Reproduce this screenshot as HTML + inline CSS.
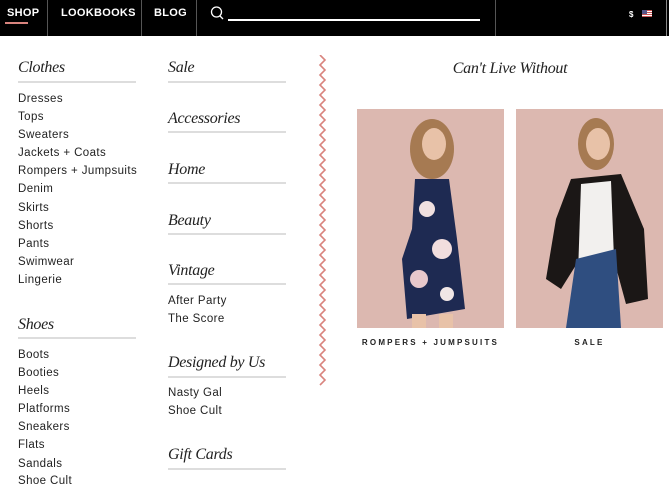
<!DOCTYPE html>
<html><head><style>
*{margin:0;padding:0;box-sizing:border-box}
body{width:669px;height:501px;background:#fff;position:relative;overflow:hidden;font-family:"Liberation Sans",sans-serif;color:#111}
.nav{position:absolute;left:0;top:0;width:669px;height:36px;background:#000}
.nav span{position:absolute;top:7px;color:#fff;font-size:11px;font-weight:bold;letter-spacing:0.3px}
.vd{position:absolute;top:0;width:1px;height:36px;background:#555}
.h{position:absolute;font-family:"Liberation Serif",serif;font-style:italic;font-size:16px;line-height:18px;color:#222;letter-spacing:-0.3px}
.r{position:absolute;height:2px;width:118px;background:#ddd}
.i{position:absolute;font-size:11.5px;line-height:14px;letter-spacing:0.4px;color:#222;white-space:nowrap}
.cap{position:absolute;top:338px;font-size:8px;letter-spacing:2.2px;font-weight:bold;color:#222;text-align:center;white-space:nowrap}
</style></head><body>
<div class="nav">
<span style="left:7px">SHOP</span>
<div style="position:absolute;left:5px;top:22px;width:23px;height:2px;background:#d9847e"></div>
<div class="vd" style="left:47px"></div>
<span style="left:61px">LOOKBOOKS</span>
<div class="vd" style="left:141px"></div>
<span style="left:154px">BLOG</span>
<div class="vd" style="left:196px"></div>
<svg style="position:absolute;left:210px;top:5px" width="14" height="16"><circle cx="6.5" cy="7" r="5" fill="none" stroke="#fff" stroke-width="1.3"/><line x1="10" y1="11" x2="13" y2="14" stroke="#fff" stroke-width="1.3"/></svg>
<div style="position:absolute;left:228px;top:19px;width:252px;height:2px;background:#fff"></div>
<div class="vd" style="left:495px"></div>
<span style="left:629px;font-size:8px;top:10px">$</span>
<div style="position:absolute;left:642px;top:10px;width:10px;height:7px;background:repeating-linear-gradient(#c55 0 1px,#fff 1px 2px)"><div style="width:5px;height:4px;background:#558"></div></div>
<div class="vd" style="left:666px;background:#888"></div>
</div>

<div class="h" style="left:18px;top:59px">Clothes</div><div class="r" style="left:18px;top:81px"></div>
<div class="i" style="left:18px;top:92px">Dresses</div>
<div class="i" style="left:18px;top:110px">Tops</div>
<div class="i" style="left:18px;top:128px">Sweaters</div>
<div class="i" style="left:18px;top:146px">Jackets + Coats</div>
<div class="i" style="left:18px;top:164px">Rompers + Jumpsuits</div>
<div class="i" style="left:18px;top:182px">Denim</div>
<div class="i" style="left:18px;top:201px">Skirts</div>
<div class="i" style="left:18px;top:219px">Shorts</div>
<div class="i" style="left:18px;top:237px">Pants</div>
<div class="i" style="left:18px;top:255px">Swimwear</div>
<div class="i" style="left:18px;top:273px">Lingerie</div>
<div class="h" style="left:18px;top:316px">Shoes</div><div class="r" style="left:18px;top:337px"></div>
<div class="i" style="left:18px;top:348px">Boots</div>
<div class="i" style="left:18px;top:366px">Booties</div>
<div class="i" style="left:18px;top:384px">Heels</div>
<div class="i" style="left:18px;top:402px">Platforms</div>
<div class="i" style="left:18px;top:420px">Sneakers</div>
<div class="i" style="left:18px;top:438px">Flats</div>
<div class="i" style="left:18px;top:457px">Sandals</div>
<div class="i" style="left:18px;top:474px">Shoe Cult</div>

<div class="h" style="left:168px;top:59px">Sale</div><div class="r" style="left:168px;top:81px"></div>
<div class="h" style="left:168px;top:110px">Accessories</div><div class="r" style="left:168px;top:131px"></div>
<div class="h" style="left:168px;top:161px">Home</div><div class="r" style="left:168px;top:182px"></div>
<div class="h" style="left:168px;top:212px">Beauty</div><div class="r" style="left:168px;top:233px"></div>
<div class="h" style="left:168px;top:262px">Vintage</div><div class="r" style="left:168px;top:283px"></div>
<div class="i" style="left:168px;top:294px">After Party</div>
<div class="i" style="left:168px;top:312px">The Score</div>
<div class="h" style="left:168px;top:354px">Designed by Us</div><div class="r" style="left:168px;top:376px"></div>
<div class="i" style="left:168px;top:386px">Nasty Gal</div>
<div class="i" style="left:168px;top:404px">Shoe Cult</div>
<div class="h" style="left:168px;top:446px">Gift Cards</div><div class="r" style="left:168px;top:468px"></div>

<svg style="position:absolute;left:318px;top:55px" width="10" height="332"><polyline fill="none" stroke="#d9847e" stroke-width="1.6" points="2,0 7,5 2,10 7,15 2,20 7,25 2,30 7,35 2,40 7,45 2,50 7,55 2,60 7,65 2,70 7,75 2,80 7,85 2,90 7,95 2,100 7,105 2,110 7,115 2,120 7,125 2,130 7,135 2,140 7,145 2,150 7,155 2,160 7,165 2,170 7,175 2,180 7,185 2,190 7,195 2,200 7,205 2,210 7,215 2,220 7,225 2,230 7,235 2,240 7,245 2,250 7,255 2,260 7,265 2,270 7,275 2,280 7,285 2,290 7,295 2,300 7,305 2,310 7,315 2,320 7,325 2,330"/></svg>

<div class="h" style="left:357px;top:60px;width:306px;text-align:center">Can't Live Without</div>

<svg style="position:absolute;left:357px;top:109px" width="147" height="219">
<rect width="147" height="219" fill="#dcb8b0"/>
<ellipse cx="75" cy="40" rx="22" ry="30" fill="#a67a52"/>
<ellipse cx="77" cy="35" rx="12" ry="16" fill="#e8c2a8"/>
<path d="M58 70 L92 70 L100 130 L108 200 L50 210 L45 150 L55 120 Z" fill="#1e2a52"/>
<circle cx="70" cy="100" r="8" fill="#f0e0e0"/><circle cx="85" cy="140" r="10" fill="#f2dede"/><circle cx="62" cy="170" r="9" fill="#e8c8cc"/><circle cx="90" cy="185" r="7" fill="#f0e6e6"/>
<rect x="55" y="205" width="14" height="14" fill="#e8c2a8"/><rect x="82" y="205" width="14" height="14" fill="#e8c2a8"/>
</svg>
<svg style="position:absolute;left:516px;top:109px" width="147" height="219">
<rect width="147" height="219" fill="#dcb8b0"/>
<ellipse cx="80" cy="35" rx="18" ry="26" fill="#a67a52"/>
<ellipse cx="82" cy="35" rx="12" ry="16" fill="#e8c2a8"/>
<path d="M55 70 L105 65 L128 120 L132 190 L110 195 L95 140 L70 140 L45 180 L30 170 L40 110 Z" fill="#1b1716"/>
<path d="M65 75 L95 72 L98 150 L62 165 Z" fill="#f2f0ee"/>
<path d="M60 150 L100 140 L105 219 L50 219 Z" fill="#2f4e80"/>
</svg>
<div class="cap" style="left:347px;width:167px">ROMPERS + JUMPSUITS</div>
<div class="cap" style="left:516px;width:147px">SALE</div>
</body></html>
